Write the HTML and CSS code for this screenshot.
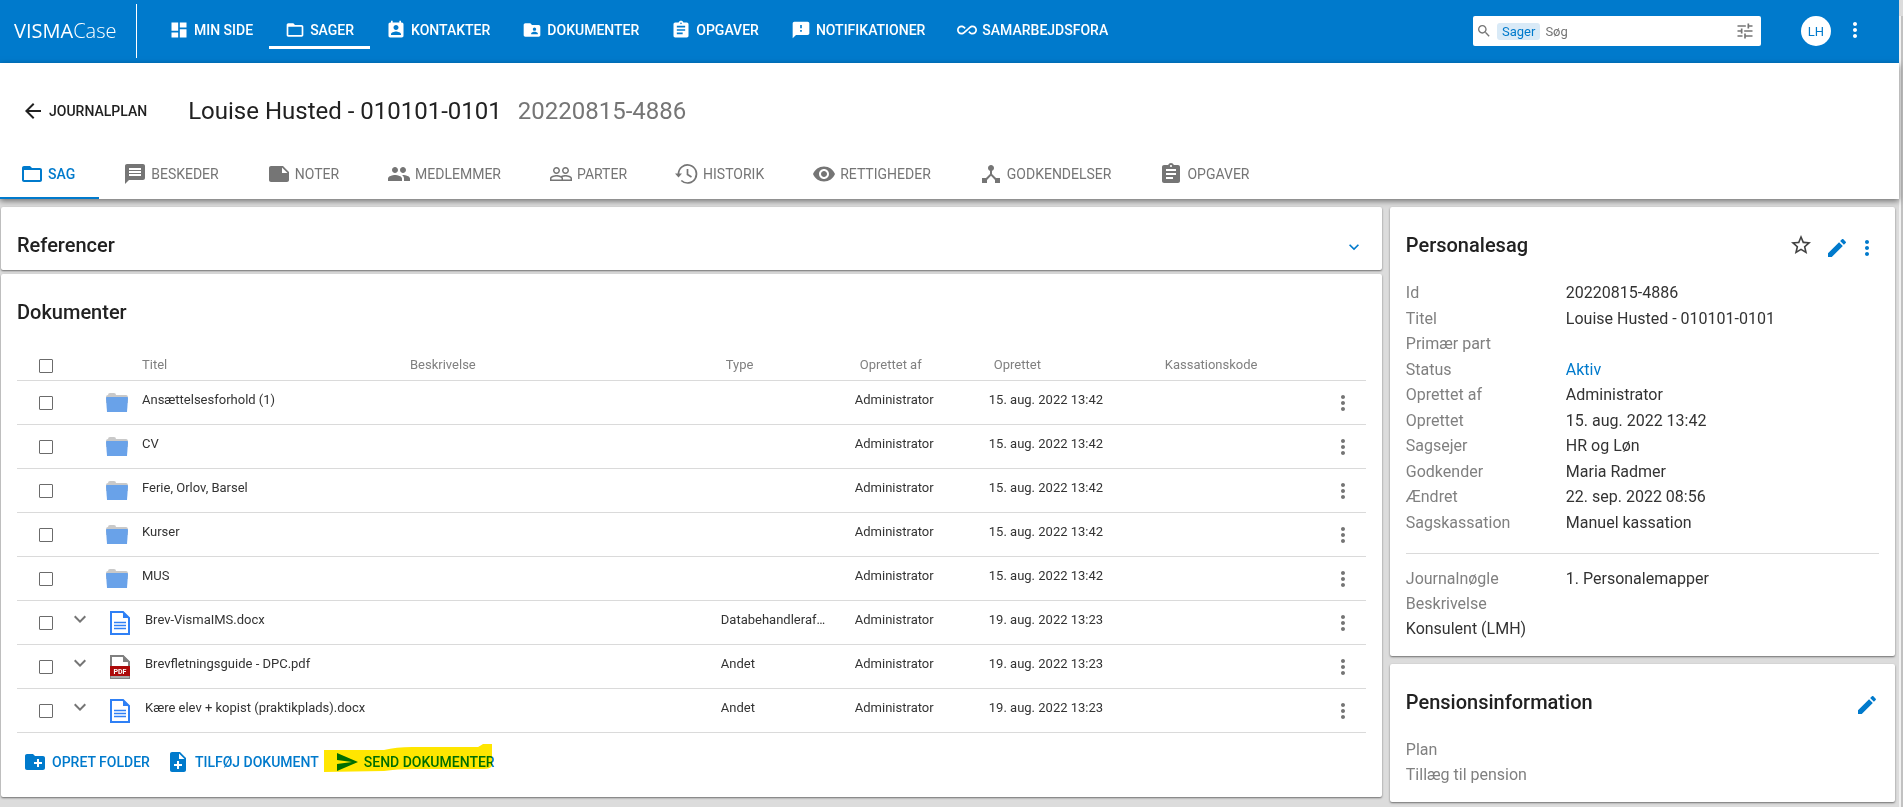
FILE: index.html
```
<!DOCTYPE html>
<html lang="da">
<head>
    <meta charset="UTF-8">
    <meta name="viewport" content="width=device-width, initial-scale=1.0">
    <title>Visma Case</title>
    <link rel="stylesheet" href="styles.css">
</head>
<body>

<!-- Icon sprite -->
<svg class="sprite" xmlns="http://www.w3.org/2000/svg">
    <symbol id="dashboard" viewBox="0 0 24 24"><path d="M3 13h8V3H3v10zm0 8h8v-6H3v6zm10 0h8V11h-8v10zm0-18v6h8V3h-8z"/></symbol>
    <symbol id="folder" viewBox="0 0 24 24"><path d="M20 6h-8l-2-2H4c-1.1 0-1.99.9-1.99 2L2 18c0 1.1.9 2 2 2h16c1.1 0 2-.9 2-2V8c0-1.1-.9-2-2-2zm0 12H4V8h16v10z"/></symbol>
    <symbol id="contact" viewBox="0 0 24 24"><path d="M19 3h-1V1h-2v2H8V1H6v2H5c-1.11 0-2 .9-2 2v14c0 1.1.89 2 2 2h14c1.1 0 2-.9 2-2V5c0-1.1-.9-2-2-2zm-7 3c1.66 0 3 1.34 3 3s-1.34 3-3 3-3-1.34-3-3 1.34-3 3-3zm6 12H6v-1c0-2 4-3.1 6-3.1s6 1.1 6 3.1v1z"/></symbol>
    <symbol id="folder-shared" viewBox="0 0 24 24"><path d="M20 6h-8l-2-2H4c-1.1 0-1.99.9-1.99 2L2 18c0 1.1.9 2 2 2h16c1.1 0 2-.9 2-2V8c0-1.1-.9-2-2-2zm-5 3c1.1 0 2 .9 2 2s-.9 2-2 2-2-.9-2-2 .9-2 2-2zm4 8h-8v-1c0-1.33 2.67-2 4-2s4 .67 4 2v1z"/></symbol>
    <symbol id="assignment" viewBox="0 0 24 24"><path d="M19 3h-4.18C14.4 1.84 13.3 1 12 1c-1.3 0-2.4.84-2.82 2H5c-1.1 0-2 .9-2 2v14c0 1.1.9 2 2 2h14c1.1 0 2-.9 2-2V5c0-1.1-.9-2-2-2zm-7 0c.55 0 1 .45 1 1s-.45 1-1 1-1-.45-1-1 .45-1 1-1zm2 14H7v-2h7v2zm3-4H7v-2h10v2zm0-4H7V7h10v2z"/></symbol>
    <symbol id="feedback" viewBox="0 0 24 24"><path d="M20 2H4c-1.1 0-1.99.9-1.99 2L2 22l4-4h14c1.1 0 2-.9 2-2V4c0-1.1-.9-2-2-2zm-7 12h-2v-2h2v2zm0-4h-2V6h2v4z"/></symbol>
    <symbol id="infinite" viewBox="0 0 24 24"><path d="M18.6 6.62c-1.44 0-2.8.56-3.77 1.53L12 10.66 10.48 12h.01L7.8 14.39c-.64.64-1.49.99-2.4.99-1.87 0-3.39-1.51-3.39-3.38S3.53 8.62 5.4 8.62c.91 0 1.76.35 2.44 1.03l1.13 1 1.51-1.34L9.22 8.2C8.2 7.18 6.84 6.62 5.4 6.62 2.42 6.62 0 9.04 0 12s2.42 5.38 5.4 5.38c1.44 0 2.8-.56 3.77-1.53l2.83-2.5.01.01L13.52 12h-.01l2.69-2.39c.64-.64 1.49-.99 2.4-.99 1.87 0 3.39 1.51 3.39 3.38s-1.52 3.38-3.39 3.38c-.9 0-1.76-.35-2.44-1.03l-1.14-1.01-1.51 1.34 1.27 1.12c1.02 1.01 2.37 1.57 3.82 1.57 2.98 0 5.4-2.41 5.4-5.38s-2.42-5.37-5.4-5.37z"/></symbol>
    <symbol id="search" viewBox="0 0 24 24"><path d="M15.5 14h-.79l-.28-.27C15.41 12.59 16 11.11 16 9.5 16 5.91 13.09 3 9.5 3S3 5.91 3 9.5 5.91 16 9.5 16c1.61 0 3.09-.59 4.23-1.57l.27.28v.79l5 4.99L20.49 19l-4.99-5zm-6 0C7.01 14 5 11.99 5 9.5S7.01 5 9.5 5 14 7.01 14 9.5 11.99 14 9.5 14z"/></symbol>
    <symbol id="tune" viewBox="0 0 24 24"><path d="M3 17v2h6v-2H3zM3 5v2h10V5H3zm10 16v-2h8v-2h-8v-2h-2v6h2zM7 9v2H3v2h4v2h2V9H7zm14 4v-2H11v2h10zm-6-4h2V7h4V5h-4V3h-2v6z"/></symbol>
    <symbol id="more" viewBox="0 0 24 24"><path d="M12 8c1.1 0 2-.9 2-2s-.9-2-2-2-2 .9-2 2 .9 2 2 2zm0 2c-1.1 0-2 .9-2 2s.9 2 2 2 2-.9 2-2-.9-2-2-2zm0 6c-1.1 0-2 .9-2 2s.9 2 2 2 2-.9 2-2-.9-2-2-2z"/></symbol>
    <symbol id="back" viewBox="0 0 24 24"><path d="M20 11H7.83l5.59-5.59L12 4l-8 8 8 8 1.41-1.41L7.83 13H20v-2z"/></symbol>
    <symbol id="message" viewBox="0 0 24 24"><path d="M20 2H4c-1.1 0-1.99.9-1.99 2L2 22l4-4h14c1.1 0 2-.9 2-2V4c0-1.1-.9-2-2-2zm-2 12H6v-2h12v2zm0-3H6V9h12v2zm0-3H6V6h12v2z"/></symbol>
    <symbol id="note" viewBox="0 0 24 24"><path d="M22 10l-6-6H4c-1.1 0-2 .9-2 2v12.01c0 1.1.9 1.99 2 1.99l16-.01c1.1 0 2-.89 2-1.99v-8zm-7-4.5l5.5 5.5H15V5.5z"/></symbol>
    <symbol id="group" viewBox="0 0 24 24"><path d="M16 11c1.66 0 2.99-1.34 2.99-3S17.66 5 16 5c-1.66 0-3 1.34-3 3s1.34 3 3 3zm-8 0c1.66 0 2.99-1.34 2.99-3S9.66 5 8 5C6.34 5 5 6.34 5 8s1.34 3 3 3zm0 2c-2.33 0-7 1.17-7 3.5V19h14v-2.5c0-2.33-4.67-3.5-7-3.5zm8 0c-.29 0-.62.02-.97.05 1.16.84 1.97 1.97 1.97 3.45V19h6v-2.5c0-2.33-4.67-3.5-7-3.5z"/></symbol>
    <symbol id="people" viewBox="0 0 24 24"><path d="M16.5 13c-1.2 0-3.07.34-4.5 1-1.43-.67-3.3-1-4.5-1C5.33 13 1 14.08 1 16.25V19h22v-2.75c0-2.17-4.33-3.25-6.5-3.25zm-4 4.5h-10v-1.25c0-.54 2.56-1.75 5-1.75s5 1.21 5 1.75v1.25zm9 0H14v-1.25c0-.46-.2-.86-.52-1.22.88-.3 1.96-.53 3.02-.53 2.44 0 5 1.21 5 1.75v1.25zM7.5 12c1.93 0 3.5-1.57 3.5-3.5S9.43 5 7.5 5 4 6.57 4 8.5 5.57 12 7.5 12zm0-5.5c1.1 0 2 .9 2 2s-.9 2-2 2-2-.9-2-2 .9-2 2-2zm9 5.5c1.93 0 3.5-1.57 3.5-3.5S18.43 5 16.5 5 13 6.57 13 8.5s1.57 3.5 3.5 3.5zm0-5.5c1.1 0 2 .9 2 2s-.9 2-2 2-2-.9-2-2 .9-2 2-2z"/></symbol>
    <symbol id="history" viewBox="0 0 24 24"><path d="M0 11.5h7l-3.500 4z"/><path d="M3.500 12a9 9 0 1 1 2.800 6.500M12.500 7v5.500l4 2.500" fill="none" stroke="currentColor" stroke-width="1.700"/></symbol>
    <symbol id="eye" viewBox="0 0 24 24"><path d="M12 4.5C7 4.5 2.730 7.610 1 12c1.730 4.390 6 7.500 11 7.500s9.270-3.110 11-7.500c-1.730-4.390-6-7.500-11-7.500zM12 17c-2.760 0-5-2.240-5-5s2.240-5 5-5 5 2.240 5 5-2.240 5-5 5zm0-8c-1.660 0-3 1.340-3 3s1.340 3 3 3 3-1.340 3-3-1.340-3-3-3z"/></symbol>
    <symbol id="hub" viewBox="0 0 24 24"><path d="M17 16l-4-4V8.820C14.160 8.400 15 7.300 15 6c0-1.660-1.340-3-3-3S9 4.340 9 6c0 1.300.84 2.400 2 2.820V12l-4 4H3v5h5v-3.050l4-4.200 4 4.200V21h5v-5h-4z"/></symbol>
    <symbol id="chevron" viewBox="0 0 24 24"><path d="M7.410 8.590L12 13.170l4.590-4.580L18 10l-6 6-6-6z"/></symbol>
    <symbol id="star" viewBox="0 0 24 24"><path d="M22 9.240l-7.190-.62L12 2 9.190 8.630 2 9.240l5.460 4.730L5.820 21 12 17.270 18.180 21l-1.630-7.030L22 9.240zM12 15.400l-3.760 2.270 1-4.280-3.320-2.880 4.380-.38L12 6.100l1.710 4.040 4.380.38-3.320 2.880 1 4.280L12 15.400z"/></symbol>
    <symbol id="edit" viewBox="0 0 24 24"><path d="M3 17.250V21h3.750L17.810 9.940l-3.750-3.750L3 17.250zM20.710 7.040c.39-.39.39-1.020 0-1.410l-2.340-2.340c-.39-.39-1.020-.39-1.410 0l-1.830 1.830 3.750 3.750 1.830-1.830z"/></symbol>
    <symbol id="new-folder" viewBox="0 0 24 24"><path d="M20 6h-8l-2-2H4c-1.110 0-1.990.89-1.990 2L2 18c0 1.110.89 2 2 2h16c1.110 0 2-.89 2-2V8c0-1.110-.89-2-2-2zm-1 8h-3v3h-2v-3h-3v-2h3V9h2v3h3v2z"/></symbol>
    <symbol id="note-add" viewBox="0 0 24 24"><path d="M14 2H6c-1.100 0-1.990.9-1.990 2L4 20c0 1.100.89 2 1.990 2H18c1.100 0 2-.9 2-2V8l-6-6zm2 14h-3v3h-2v-3H8v-2h3v-3h2v3h3v2zm-3-7V3.500L18.500 9H13z"/></symbol>
    <symbol id="send" viewBox="0 0 24 24"><path d="M2 21l21-9L2 3v7l15 2-15 2z"/></symbol>
    <symbol id="row-folder" viewBox="0 0 24 20"><path d="M3 2q0-2 2-2h4q2 0 2 2h10q2 0 2 3v5H1V4q0-2 2-2z" fill="#c9c9c9"/><path d="M1 5q0-1 1-1h20q1 0 1 1l-1 14H2z" fill="#69a2e9"/></symbol>
    <symbol id="row-doc" viewBox="0 0 20 24"><path d="M1 1h12l6 6v16H1z" fill="#fff" stroke="#2f80f5" stroke-width="2"/><path d="M13 1v6h6z" fill="#2f80f5"/><path d="M4 11.500h12M4 14.500h12M4 17.500h12" stroke="#2f80f5" stroke-width="1.300"/></symbol>
    <symbol id="row-pdf" viewBox="0 0 20 24"><path d="M1 1h12l6 6v16H1z" fill="#fff" stroke="#808080" stroke-width="2"/><path d="M13 0v7h7z" fill="#808080"/><path d="M0 11h20v10H0z" fill="#ac0a0a"/><path d="M1 21h18v2H1z" fill="#aaa"/><text x="10" y="19" text-anchor="middle" font-family="Roboto, sans-serif" font-size="7" font-weight="700" fill="#fff">PDF</text></symbol>
</svg>

<div class="app">
    <header class="topbar">
        <a href="#" class="logo">VISMA<span>Case</span></a>
        <nav class="main-nav">
            <a href="#"><svg><use href="#dashboard"/></svg>MIN SIDE</a>
            <a href="#" class="active"><svg><use href="#folder"/></svg>SAGER</a>
            <a href="#"><svg><use href="#contact"/></svg>KONTAKTER</a>
            <a href="#"><svg><use href="#folder-shared"/></svg>DOKUMENTER</a>
            <a href="#"><svg><use href="#assignment"/></svg>OPGAVER</a>
            <a href="#"><svg><use href="#feedback"/></svg>NOTIFIKATIONER</a>
            <a href="#"><svg><use href="#infinite"/></svg>SAMARBEJDSFORA</a>
        </nav>
        <div class="search">
            <svg class="search-icon"><use href="#search"/></svg>
            <span class="chip">Sager</span>
            <input type="text" placeholder="Søg" aria-label="Søg">
            <button class="icon-btn" aria-label="Filtre"><svg><use href="#tune"/></svg></button>
        </div>
        <button class="avatar">LH</button>
        <button class="icon-btn top-more" aria-label="Menu"><svg><use href="#more"/></svg></button>
    </header>

    <div class="case-header">
        <div class="case-title">
            <a href="#" class="back"><svg><use href="#back"/></svg>JOURNALPLAN</a>
            <h1>Louise Husted - 010101-0101</h1>
            <span class="case-id">20220815-4886</span>
        </div>
        <nav class="tabs">
            <a href="#" class="active"><svg><use href="#folder"/></svg>SAG</a>
            <a href="#"><svg><use href="#message"/></svg>BESKEDER</a>
            <a href="#"><svg><use href="#note"/></svg>NOTER</a>
            <a href="#"><svg><use href="#group"/></svg>MEDLEMMER</a>
            <a href="#"><svg><use href="#people"/></svg>PARTER</a>
            <a href="#"><svg><use href="#history"/></svg>HISTORIK</a>
            <a href="#"><svg><use href="#eye"/></svg>RETTIGHEDER</a>
            <a href="#"><svg><use href="#hub"/></svg>GODKENDELSER</a>
            <a href="#"><svg><use href="#assignment"/></svg>OPGAVER</a>
        </nav>
    </div>

    <main class="content">
        <div class="column">
            <section class="card references">
                <h2>Referencer</h2>
                <button class="icon-btn blue" aria-label="Vis referencer"><svg><use href="#chevron"/></svg></button>
            </section>

            <section class="card documents">
                <h2>Dokumenter</h2>
                <table>
                    <colgroup>
                        <col class="col-check"><col class="col-expand"><col class="col-icon">
                        <col class="col-title"><col><col class="col-type">
                        <col class="col-by"><col class="col-date"><col class="col-code"><col class="col-more">
                    </colgroup>
                    <thead>
                        <tr>
                            <th><input type="checkbox" aria-label="Vælg alle"></th>
                            <th></th>
                            <th></th>
                            <th class="label">Titel</th>
                            <th class="label">Beskrivelse</th>
                            <th class="label inset">Type</th>
                            <th class="label inset">Oprettet af</th>
                            <th class="label inset">Oprettet</th>
                            <th class="label inset">Kassationskode</th>
                            <th></th>
                        </tr>
                    </thead>
                    <tbody id="documentRows"></tbody>
                </table>
                <div class="actions">
                    <button><svg><use href="#new-folder"/></svg>OPRET FOLDER</button>
                    <button><svg><use href="#note-add"/></svg>TILFØJ DOKUMENT</button>
                    <button class="send"><svg><use href="#send"/></svg>SEND DOKUMENTER
                        <svg class="marker" viewBox="0 0 168 28" preserveAspectRatio="none"><path d="M0 6L60 6Q72 3 88 3L154 3Q156 2 159 0L168 0V22Q166 25 160 25L90 25Q72 25 60 27L0 28z"/></svg>
                    </button>
                </div>
            </section>
        </div>

        <aside class="column side">
            <section class="card">
                <div class="card-head">
                    <h2>Personalesag</h2>
                    <button class="icon-btn star" aria-label="Favorit"><svg><use href="#star"/></svg></button>
                    <button class="icon-btn blue" aria-label="Rediger"><svg><use href="#edit"/></svg></button>
                    <button class="icon-btn blue" aria-label="Mere"><svg><use href="#more"/></svg></button>
                </div>
                <dl class="case-info">
                    <dt>Id</dt><dd>20220815-4886</dd>
                    <dt>Titel</dt><dd>Louise Husted - 010101-0101</dd>
                    <dt>Primær part</dt><dd></dd>
                    <dt>Status</dt><dd><a href="#">Aktiv</a></dd>
                    <dt>Oprettet af</dt><dd>Administrator</dd>
                    <dt>Oprettet</dt><dd>15. aug. 2022 13:42</dd>
                    <dt>Sagsejer</dt><dd>HR og Løn</dd>
                    <dt>Godkender</dt><dd>Maria Radmer</dd>
                    <dt>Ændret</dt><dd>22. sep. 2022 08:56</dd>
                    <dt>Sagskassation</dt><dd>Manuel kassation</dd>
                </dl>
                <hr>
                <dl>
                    <dt>Journalnøgle</dt><dd>1. Personalemapper</dd>
                    <dt>Beskrivelse</dt><dd></dd>
                    <dd class="wide">Konsulent (LMH)</dd>
                </dl>
            </section>

            <section class="card">
                <div class="card-head">
                    <h2>Pensionsinformation</h2>
                    <button class="icon-btn blue" aria-label="Rediger"><svg><use href="#edit"/></svg></button>
                </div>
                <dl>
                    <dt>Plan</dt><dd></dd>
                    <dt>Tillæg til pension</dt><dd></dd>
                </dl>
            </section>
        </aside>
    </main>
</div>
<div class="scrollbar"></div>

<script>
    const documents = [
        { icon: 'folder', title: 'Ansættelsesforhold (1)', type: '', date: '15. aug. 2022 13:42' },
        { icon: 'folder', title: 'CV', type: '', date: '15. aug. 2022 13:42' },
        { icon: 'folder', title: 'Ferie, Orlov, Barsel', type: '', date: '15. aug. 2022 13:42' },
        { icon: 'folder', title: 'Kurser', type: '', date: '15. aug. 2022 13:42' },
        { icon: 'folder', title: 'MUS', type: '', date: '15. aug. 2022 13:42' },
        { icon: 'doc', title: 'Brev-VismaIMS.docx', type: 'Databehandleraftale', date: '19. aug. 2022 13:23' },
        { icon: 'pdf', title: 'Brevfletningsguide - DPC.pdf', type: 'Andet', date: '19. aug. 2022 13:23' },
        { icon: 'doc', title: 'Kære elev + kopist (praktikplads).docx', type: 'Andet', date: '19. aug. 2022 13:23' }
    ];

    const rows = document.getElementById("documentRows");

    documents.forEach(doc => {
        const isFile = doc.icon !== 'folder';
        const row = document.createElement("tr");
        row.className = isFile ? "file" : "folder";
        row.innerHTML = `
            <td><input type="checkbox" aria-label="${doc.title}"></td>
            <td class="text">${isFile ? '<button class="icon-btn expand" aria-label="Udvid"><svg><use href="#chevron"/></svg></button>' : ''}</td>
            <td><svg class="row-icon"><use href="#row-${doc.icon}"/></svg></td>
            <td class="text title">${doc.title}</td>
            <td></td>
            <td class="text type">${doc.type}</td>
            <td class="text">Administrator</td>
            <td class="text">${doc.date}</td>
            <td></td>
            <td><button class="icon-btn" aria-label="Mere"><svg><use href="#more"/></svg></button></td>`;
        rows.appendChild(row);
    });
</script>

</body>
</html>
```

FILE: styles.css
```
* {
    box-sizing: border-box;
}

body {
    margin: 0;
    display: flex;
    min-height: 100vh;
    font-family: Roboto, sans-serif;
    font-size: 14px;
    color: #212121;
    background-color: #dcdcdc;
}

a {
    color: inherit;
    text-decoration: none;
}

button {
    font-family: inherit;
    border: none;
    padding: 0;
    background: none;
    cursor: pointer;
}

svg {
    display: block;
    flex: none;
    width: 24px;
    height: 24px;
    fill: currentColor;
}

.sprite {
    display: none;
}

.app {
    flex: 1;
    min-width: 0;
}

.scrollbar {
    width: 4px;
    margin-top: 16px;
    background-color: #c1c1c1;
    border-left: 2px solid #f1f1f1;
}

.icon-btn {
    display: flex;
    align-items: center;
    justify-content: center;
    color: #757575;
}

.icon-btn.blue {
    color: #007acc;
}

/* Top bar */
.topbar {
    display: flex;
    height: 63px;
    padding-right: 32px;
    align-items: flex-start;
    background-color: #007acc;
    color: #fff;
}

.logo {
    width: 137px;
    height: 54px;
    margin: 4px 16px 0 0;
    padding-left: 14px;
    border-right: 1px solid #fff;
    font-family: "Open Sans", sans-serif;
    font-size: 20px;
    line-height: 54px;
}

.logo span {
    font-weight: 300;
}

.main-nav {
    display: flex;
    flex: 1;
}

.main-nav a {
    display: flex;
    align-items: center;
    gap: 5px;
    height: 49px;
    padding: 14px 16px 0;
    border-bottom: 3px solid transparent;
    font-weight: 500;
    white-space: nowrap;
}

.main-nav svg {
    width: 20px;
    height: 20px;
}

.main-nav a.active {
    border-bottom-color: #fff;
}

.search {
    display: flex;
    align-items: center;
    width: 288px;
    height: 30px;
    margin-top: 16px;
    padding: 0 6px 0 3px;
    border-radius: 2px;
    background-color: #fff;
    color: #757575;
}

.search .search-icon {
    width: 16px;
    height: 16px;
    margin-right: 5px;
}

.chip {
    padding: 0 5px;
    border-radius: 3px;
    background-color: #d9eaf7;
    color: #007acc;
    font-size: 13px;
    line-height: 17px;
}

.search input {
    flex: 1;
    min-width: 0;
    padding: 0 5px;
    border: none;
    outline: none;
    font-family: inherit;
    font-size: 13px;
}

.search input::placeholder {
    color: #757575;
}

.search .icon-btn svg {
    width: 20px;
    height: 20px;
}

.avatar {
    width: 30px;
    height: 30px;
    margin: 16px 12px 0 40px;
    border-radius: 50%;
    background-color: #fff;
    color: #007acc;
    font-size: 13px;
}

.top-more {
    margin-top: 18px;
    color: #fff;
}

/* Case header */
.case-header {
    position: relative;
    background-color: #fff;
    box-shadow: 0 2px 6px rgba(0, 0, 0, 0.5);
}

.case-title {
    display: flex;
    align-items: center;
    height: 86px;
    padding: 9px 0 0 21px;
}

.back {
    display: flex;
    align-items: center;
    gap: 4px;
    margin-right: 41px;
    font-weight: 500;
}

h1 {
    margin: 0 16px 0 0;
    font-size: 24px;
    font-weight: 400;
}

.case-id {
    font-size: 24px;
    color: #757575;
}

.tabs {
    display: flex;
    margin-left: -4px;
}

.tabs a {
    display: flex;
    align-items: center;
    gap: 4px;
    height: 50px;
    padding: 0 24px;
    color: #757575;
    white-space: nowrap;
}

.tabs a.active {
    color: #007acc;
    font-weight: 500;
    box-shadow: inset 0 -2px #007acc;
}

/* Cards */
.content {
    display: grid;
    grid-template-columns: minmax(0, 41fr) minmax(0, 15fr);
    align-items: start;
    gap: 8px;
    padding: 8px 4px 4px 1px;
}

.column {
    display: flex;
    flex-direction: column;
    gap: 4px;
}

.side {
    gap: 8px;
}

.card {
    padding: 26px 16px 0;
    border-radius: 2px;
    background-color: #fff;
    box-shadow: 0 1px 2px rgba(0, 0, 0, 0.5);
}

h2 {
    margin: 0;
    font-size: 20px;
    font-weight: 500;
    line-height: 24px;
}

.references {
    display: flex;
    justify-content: space-between;
    padding-bottom: 13px;
}

.references .icon-btn {
    align-self: flex-end;
}

.references .icon-btn svg {
    height: 20px;
}

/* Document table */
.documents h2 {
    margin-bottom: 26px;
}

table {
    width: 100%;
    table-layout: fixed;
    border-spacing: 0;
    font-size: 13px;
}

.col-check { width: 43px; }
.col-expand { width: 43px; }
.col-icon { width: 39px; }
.col-title { width: 268px; }
.col-type { width: 134px; }
.col-by { width: 134px; }
.col-date { width: 171px; }
.col-code { width: 171px; }
.col-more { width: 35px; }

th, td {
    padding: 0;
    border-bottom: 1px solid #dadada;
    text-align: left;
}

th {
    height: 31px;
    font-weight: 400;
    color: #808080;
}

th.label {
    padding-bottom: 2px;
}

th.inset {
    padding-left: 5px;
}

td {
    height: 44px;
    color: #333;
}

td.text {
    padding-bottom: 7px;
}

.file .title {
    padding-left: 3px;
}

td.type {
    overflow: hidden;
    padding-right: 29px;
    text-overflow: ellipsis;
    white-space: nowrap;
}

input[type="checkbox"] {
    display: block;
    appearance: none;
    width: 14px;
    height: 14px;
    margin: 1px 0 0 22px;
    border: 1px solid #6b6b6b;
    border-radius: 1px;
    background-color: #fff;
}

.expand {
    width: 40px;
}

.row-icon {
    width: 24px;
    height: 20px;
    margin-left: 2px;
}

.file .row-icon {
    width: 20px;
    height: 24px;
    margin-left: 7px;
}

.actions {
    display: flex;
    gap: 16px;
    padding: 14px 6px 20px;
}

.actions button {
    display: flex;
    align-items: center;
    gap: 5px;
    height: 30px;
    color: #007acc;
    font-size: 14px;
    font-weight: 500;
    white-space: nowrap;
}

.actions .send {
    position: relative;
}

/* Highlighter stroke laid over the send button */
.marker {
    position: absolute;
    top: -3px;
    left: -11px;
    width: 168px;
    height: 28px;
    fill: #ffe600;
    mix-blend-mode: multiply;
}

/* Side cards */
.side .card {
    padding-bottom: 15px;
}

.card-head {
    display: flex;
    align-items: flex-start;
    gap: 6px;
    margin-bottom: 20px;
}

.card-head h2 {
    flex: 1;
}

.card-head .icon-btn {
    margin-top: 3px;
    height: 24px;
}

.card-head .star {
    margin: 0 6px 0 0;
    color: #424242;
}

dl {
    display: grid;
    grid-template-columns: 160px minmax(0, 1fr);
    margin: 0;
    font-size: 16px;
    line-height: 25px;
}

.case-info {
    min-height: 255px;
    align-content: space-between;
}

dt {
    color: #808080;
}

dd {
    min-height: 25px;
    margin: 0;
    color: #333;
}

dd a {
    color: #007acc;
}

dd.wide {
    grid-column: 1 / -1;
}

hr {
    margin: 18px 0 12px;
    border: none;
    border-top: 1px solid #dadada;
}
```
